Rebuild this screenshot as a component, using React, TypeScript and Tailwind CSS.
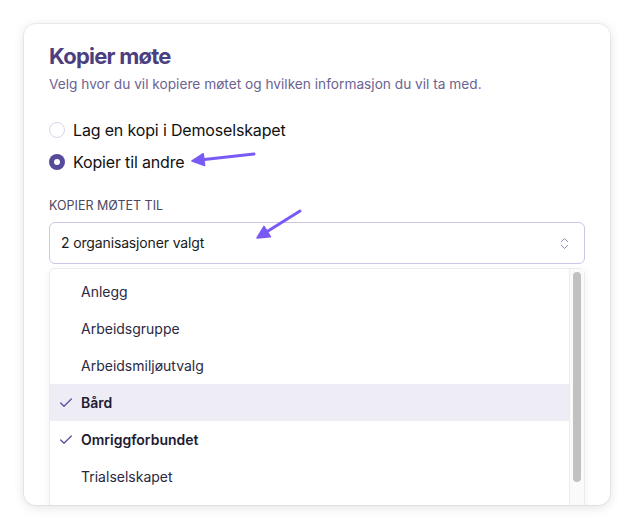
import React from 'react';
import { Check, ChevronsUpDown } from 'lucide-react';

const options = [
  { name: 'Anlegg', selected: false },
  { name: 'Arbeidsgruppe', selected: false },
  { name: 'Arbeidsmiljøutvalg', selected: false },
  { name: 'Bård', selected: true, active: true },
  { name: 'Omriggforbundet', selected: true },
  { name: 'Trialselskapet', selected: false },
];

const Arrows: React.FC = () => (
  <svg className="pointer-events-none absolute left-0 top-0" width="634" height="530" viewBox="0 0 634 530">
    {/* pointer to "Kopier til andre" */}
    <line x1="254" y1="154" x2="202" y2="159.8" stroke="#7a5af5" strokeWidth="3" strokeLinecap="round" />
    <polygon points="192,161 204.6,165.6 203.2,153.7" fill="#7a5af5" stroke="#7a5af5" strokeWidth="1.5" strokeLinejoin="round" />
    {/* pointer to the select */}
    <line x1="300" y1="211" x2="266" y2="232.3" stroke="#7a5af5" strokeWidth="3" strokeLinecap="round" />
    <polygon points="257,238 270.4,236.7 264,226.5" fill="#7a5af5" stroke="#7a5af5" strokeWidth="1.5" strokeLinejoin="round" />
  </svg>
);

export default function App() {
  return (
    <div
      className="relative h-[530px] w-[634px] bg-white"
      style={{ fontFamily: 'Inter, "Noto Sans", sans-serif' }}
    >
      <div className="absolute left-6 top-6 h-[481px] w-[586px] overflow-hidden rounded-xl bg-white px-[25px] pt-[18px] shadow-[0_2px_12px_rgba(0,0,0,0.12)] ring-1 ring-black/5">
        {/* Header */}
        <h1 className="text-[22px] font-bold leading-7 tracking-[-0.035em] text-[#4c3f80]">Kopier møte</h1>
        <p className="mt-[4px] text-[13.7px] leading-5 text-[#6c6390]">
          Velg hvor du vil kopiere møtet og hvilken informasjon du vil ta med.
        </p>

        {/* Radio group */}
        <div className="mt-[24px] flex flex-col gap-[8px]">
          <label className="flex h-6 items-center gap-2">
            <span className="h-4 w-4 rounded-full border border-[#d8d4ea] bg-white" />
            <span className="text-base tracking-[-0.01em] text-[#111]">Lag en kopi i Demoselskapet</span>
          </label>
          <label className="flex h-6 items-center gap-2">
            <span className="flex h-4 w-4 items-center justify-center rounded-full bg-[#554a9c]">
              <span className="h-[6px] w-[6px] rounded-full bg-white" />
            </span>
            <span className="text-base tracking-[-0.01em] text-[#111]">Kopier til andre</span>
          </label>
        </div>

        {/* Select */}
        <div className="mt-[24px] text-[12.5px] uppercase leading-4 text-[#4b4860]">Kopier møtet til</div>
        <div className="mt-[8px] flex h-[42px] items-center justify-between rounded-md border border-[#cbc5e6] pl-[11px] pr-[12px]">
          <span className="text-sm tracking-[-0.01em] text-[#1a1a1a]">2 organisasjoner valgt</span>
          <ChevronsUpDown size={15} strokeWidth={1.6} className="text-[#8f86c4]" />
        </div>

        {/* Options list */}
        <div className="mt-1 flex h-[260px] rounded-t-md border border-[#ebebeb] bg-white shadow-[0_2px_8px_rgba(0,0,0,0.06)]">
          <ul className="flex-1 pt-1">
            {options.map((o) => (
              <li
                key={o.name}
                className={`flex h-[37px] items-center text-sm ${o.active ? 'bg-[#eeedf6]' : ''}`}
              >
                <span className="flex w-[31px] justify-end pr-[7px]">
                  {o.selected && <Check size={16} strokeWidth={2} className="text-[#5b51a2]" />}
                </span>
                <span className={o.selected ? 'font-semibold text-[#1e1b33]' : 'text-[#2b2842]'}>{o.name}</span>
              </li>
            ))}
          </ul>
          <div className="w-[15px] border-l border-[#ececec] bg-[#fafafa] px-[3px] pt-[3px]">
            <div className="h-[210px] rounded-full bg-[#c1c1c1]" />
          </div>
        </div>
      </div>
      <Arrows />
    </div>
  );
}
